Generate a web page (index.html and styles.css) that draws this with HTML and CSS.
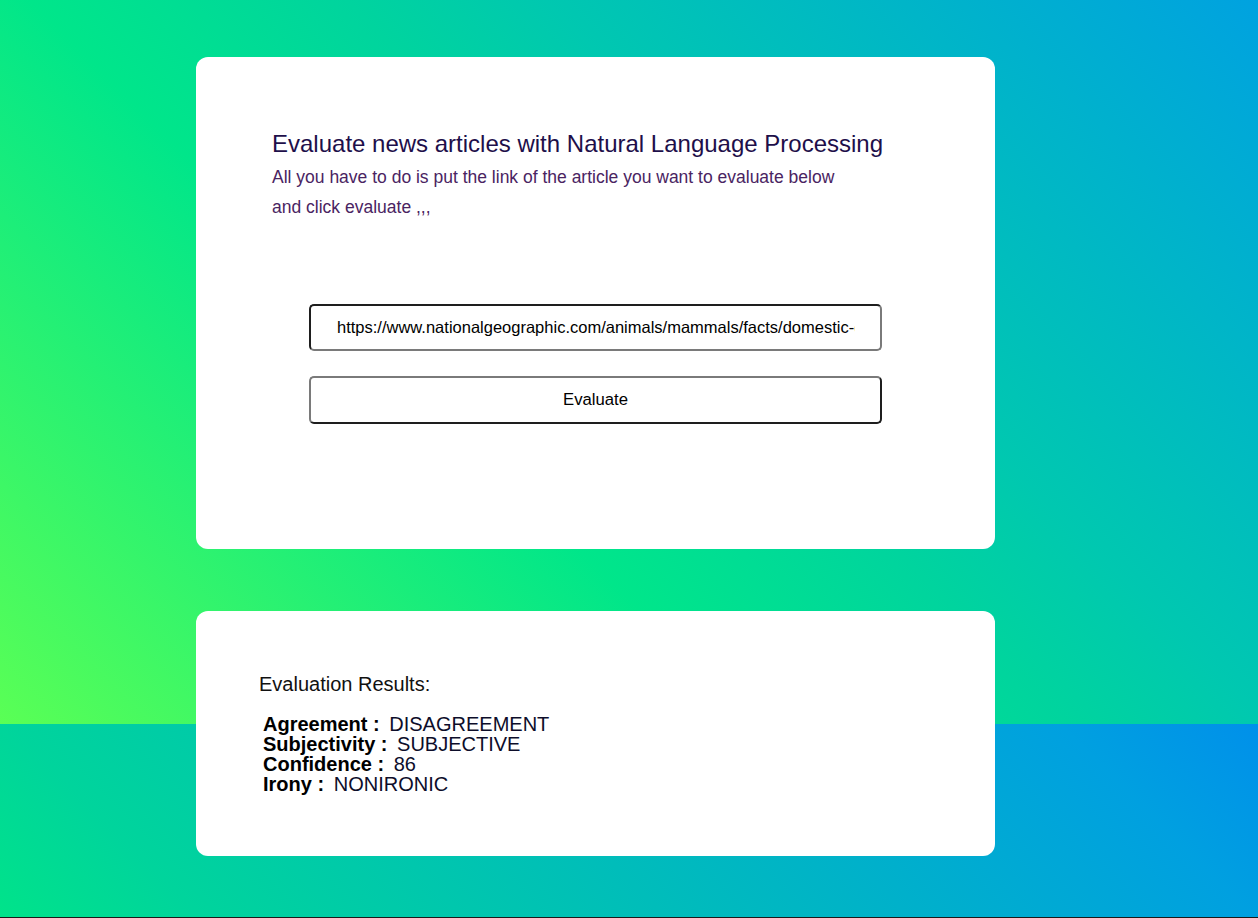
FILE: index.html
```html
<!DOCTYPE html>
<html lang="en">
<head>
<meta charset="utf-8">
<title>News Evaluator</title>
<link rel="stylesheet" href="styles.css">
</head>
<body>
  <main class="page">
    <section class="card card-form">
      <h1 class="title">Evaluate news articles with Natural Language Processing</h1>
      <p class="lead">All you have to do is put the link of the article you want to evaluate below<br>and click evaluate ,,,</p>
      <form class="form">
        <input class="url" type="text" value="https://www.nationalgeographic.com/animals/mammals/facts/domestic-cat">
        <button class="btn" type="button">Evaluate</button>
      </form>
    </section>
    <section class="card card-results">
      <h2 class="results-title">Evaluation Results:</h2>
      <div class="results">
        <div class="row"><strong class="label">Agreement :</strong> <span class="value">DISAGREEMENT</span></div>
        <div class="row"><strong class="label">Subjectivity :</strong> <span class="value">SUBJECTIVE</span></div>
        <div class="row"><strong class="label">Confidence :</strong> <span class="value">86</span></div>
        <div class="row"><strong class="label">Irony :</strong> <span class="value">NONIRONIC</span></div>
      </div>
    </section>
  </main>
  <footer class="footer"></footer>
</body>
</html>
```
FILE: styles.css
```css
html {
  background:
    linear-gradient(45deg, #5aff55 0%, #00e68a 38%, #00d49e 54%, #00c8b0 64%, #00a2e0 100%) 0 0 / 100% 724px no-repeat,
    linear-gradient(45deg, #3ff268 0%, #00e38a 27%, #00d49c 37%, #00a0e0 90%, #0090ea 100%) 0 724px / 100% 724px no-repeat;
  background-color: #00c0b8;
}

body {
  margin: 0;
  min-height: 100vh;
  display: flex;
  flex-direction: column;
  font-family: "Liberation Sans", Arial, sans-serif;
}

.page {
  flex: 1;
  padding: 57px 0 0 196px;
}

.card {
  box-sizing: border-box;
  width: 799px;
  background: #fff;
  border-radius: 12px;
}

.card-form {
  height: 492px;
  padding: 74px 0 0 76px;
}

.title {
  margin: 0;
  font-size: 24px;
  font-weight: normal;
  line-height: 25px;
  color: #1e0f4a;
}

.lead {
  margin: 6px 0 0;
  font-size: 17.5px;
  line-height: 30px;
  color: #4a2462;
}

.form {
  display: flex;
  flex-direction: column;
  gap: 25px;
  width: 573px;
  margin: 82px 0 0 37px;
}

.url {
  box-sizing: border-box;
  height: 47px;
  width: 100%;
  padding: 0 25px 0 26px;
  border: 2px solid;
  border-color: #1e1e1e #7a7a7a #7a7a7a #1e1e1e;
  border-radius: 5px;
  background: #fff;
  font-family: "Liberation Sans", Arial, sans-serif;
  font-size: 16.5px;
  color: #000;
  outline: none;
}

.btn {
  box-sizing: border-box;
  height: 48px;
  width: 100%;
  border: 2px solid;
  border-color: #7a7a7a #1e1e1e #1e1e1e #7a7a7a;
  border-radius: 5px;
  background: #fff;
  font-family: "Liberation Sans", Arial, sans-serif;
  font-size: 16.7px;
  color: #000;
  cursor: pointer;
}

.card-results {
  height: 245px;
  margin-top: 62px;
  padding: 62px 0 0 63px;
}

.results-title {
  margin: 0;
  font-size: 20px;
  font-weight: normal;
  line-height: 23px;
  color: #111;
}

.results {
  margin: 18px 0 0 4px;
  font-size: 20px;
  line-height: 20px;
  color: #111;
}

.label {
  font-weight: bold;
  color: #000;
  margin-right: 4px;
}

.value {
  color: #0d0d2a;
}

.footer {
  height: 1px;
  background: #1a1a1a;
}
```
